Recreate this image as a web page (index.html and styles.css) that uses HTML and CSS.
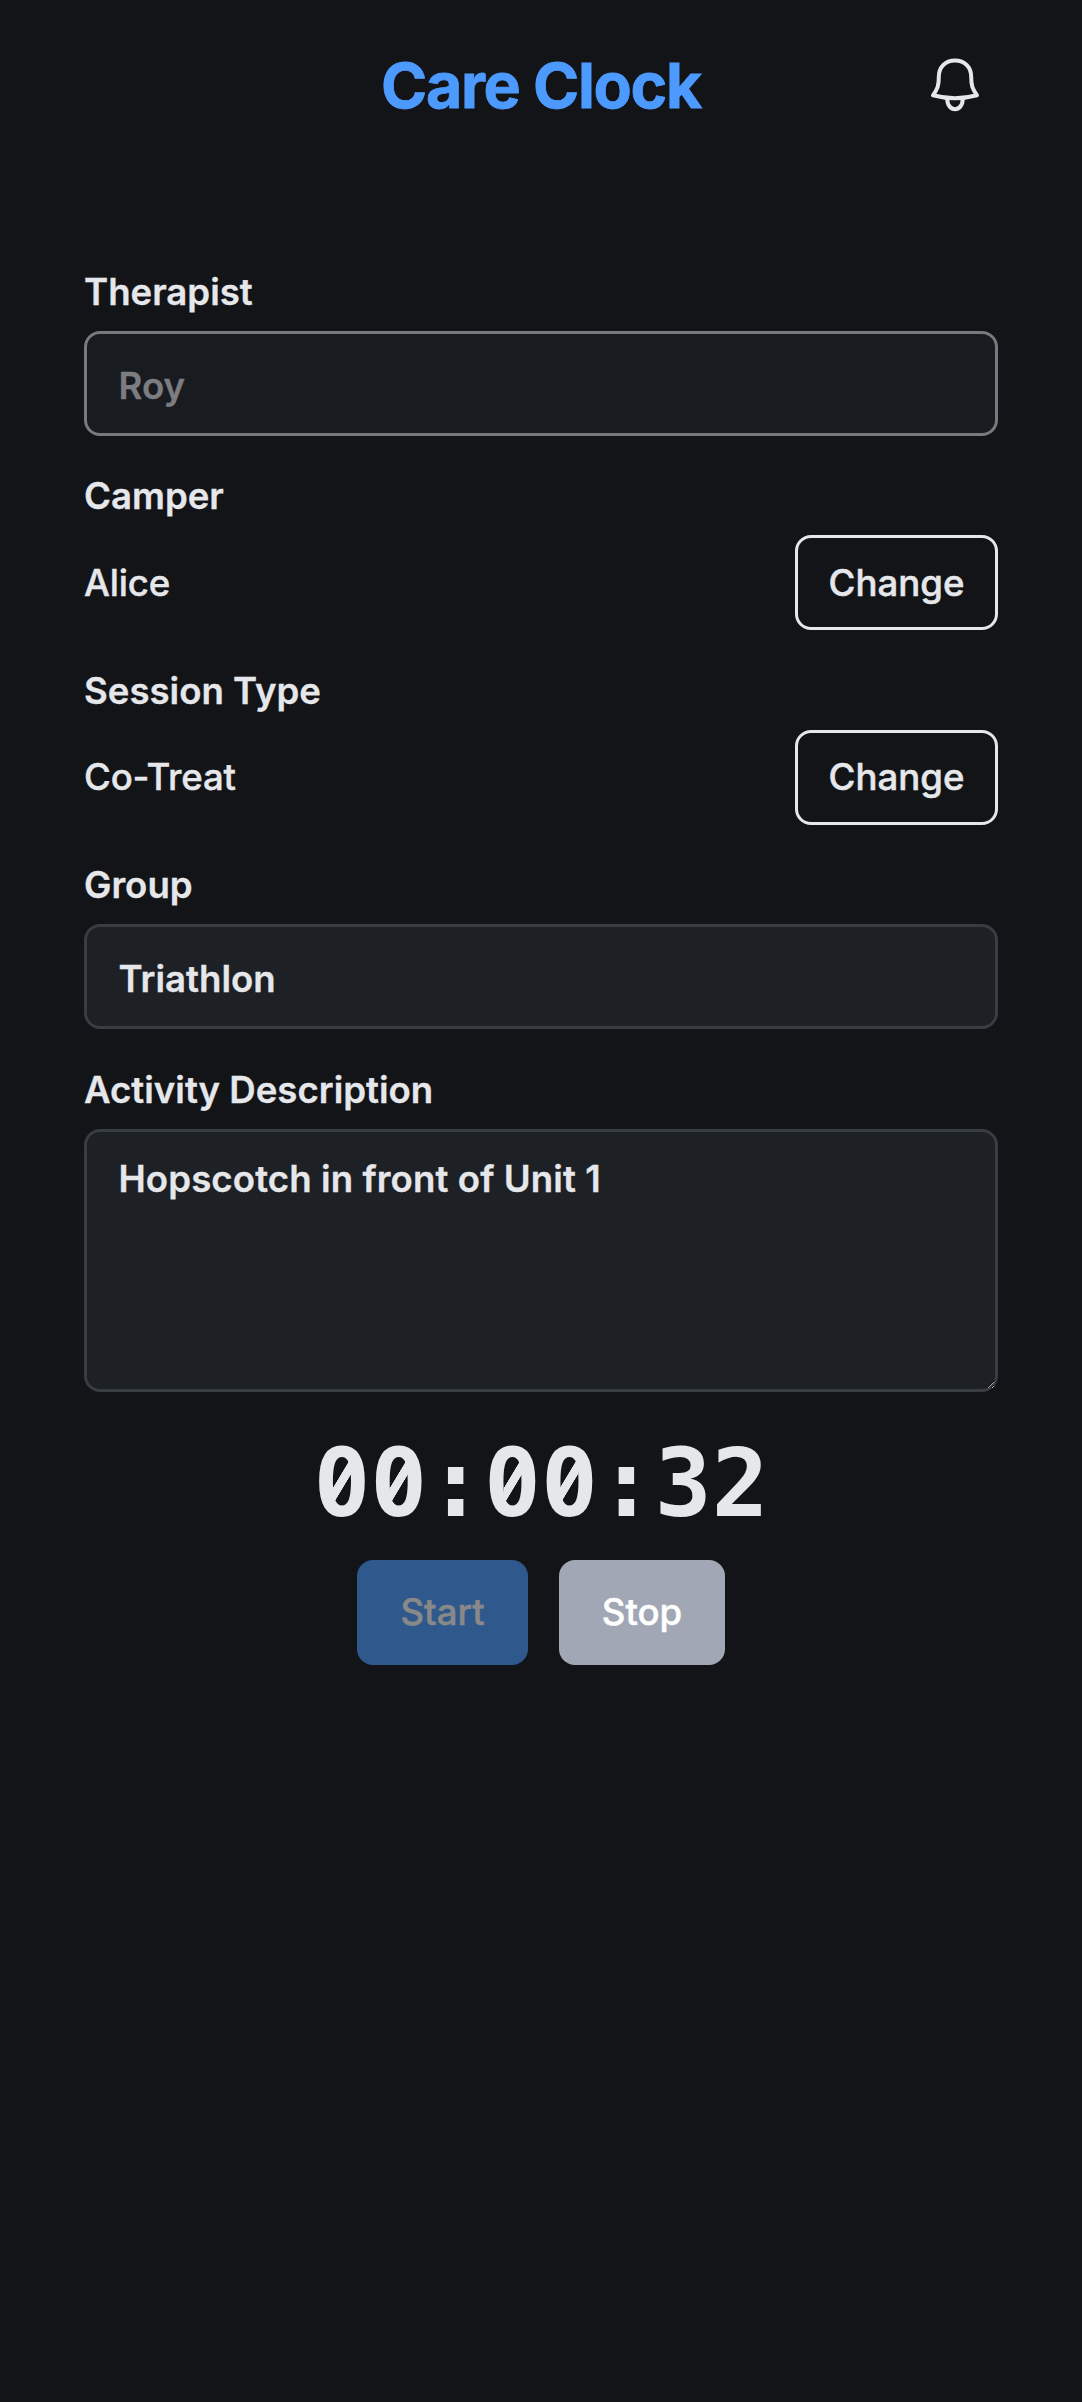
FILE: index.html
```html
<!DOCTYPE html>
<html lang="en">
<head>
<meta charset="utf-8">
<title>Care Clock</title>
<link rel="stylesheet" href="styles.css">
</head>
<body>
<header class="header">
  <h1 class="title">Care Clock</h1>
  <button class="bell" aria-label="Notifications">
    <svg viewBox="0 0 54 54" width="54" height="54" fill="none" stroke="currentColor" stroke-width="4" stroke-linejoin="round">
      <path d="M27 2.500C17 2.500 10.800 9.500 10.800 19C10.800 28 9.500 31 5 37.300Q27 43.300 49 37.300C44.500 31 43.200 28 43.200 19C43.200 9.500 37 2.500 27 2.500Z"/>
      <path d="M19.300 41C19.300 54.500 34.700 54.500 34.700 41"/>
    </svg>
  </button>
</header>
<main class="form">
  <section class="field">
    <label class="label" for="therapist">Therapist</label>
    <input class="control" id="therapist" value="Roy" disabled>
  </section>
  <section class="field">
    <h2 class="label">Camper</h2>
    <div class="row"><span class="value">Alice</span><button class="change">Change</button></div>
  </section>
  <section class="field">
    <h2 class="label">Session Type</h2>
    <div class="row"><span class="value">Co-Treat</span><button class="change">Change</button></div>
  </section>
  <section class="field">
    <label class="label" for="group">Group</label>
    <input class="control" id="group" value="Triathlon">
  </section>
  <section class="field">
    <label class="label" for="activity">Activity Description</label>
    <textarea class="control area" id="activity">Hopscotch in front of Unit 1</textarea>
  </section>
</main>
<section class="clock">
  <div class="time"><span class="zero">0</span><span class="zero">0</span>:<span class="zero">0</span><span class="zero">0</span>:32</div>
  <div class="actions">
    <button class="action start" disabled>Start</button>
    <button class="action stop">Stop</button>
  </div>
</section>
</body>
</html>
```
FILE: styles.css
```css
* { box-sizing: border-box; }
body {
  margin: 0;
  min-height: 2402px;
  background: #131418;
  color: #e6e7eb;
  font-family: Inter, "Liberation Sans", sans-serif;
  font-size: 36.600px;
}
button, input, textarea { font: inherit; color: inherit; margin: 0; }
h1, h2 { margin: 0; }
.header {
  display: grid;
  grid-template-columns: 1fr auto 1fr;
  align-items: center;
  height: 170px;
  padding: 0 100px;
}
.title {
  grid-column: 2;
  color: #4d9aff;
  font-size: 62.500px;
  font-weight: 700;
  letter-spacing: -1.300px;
  line-height: 80px;
  -webkit-text-stroke: 0.800px currentColor;
}
.bell {
  justify-self: end;
  display: flex;
  padding: 0;
  border: 0;
  background: none;
}
.form {
  display: flex;
  flex-direction: column;
  gap: 34.400px;
  padding: 96px 84px 0;
}
.field { display: flex; flex-direction: column; gap: 13px; }
.label {
  font-size: 36.600px;
  font-weight: 600;
  line-height: 52px;
  -webkit-text-stroke: 0.300px currentColor;
}
.row { display: flex; justify-content: space-between; align-items: center; }
.value {
  font-weight: 500;
  letter-spacing: -0.200px;
  -webkit-text-stroke: 0.400px currentColor;
}
.control {
  display: block;
  width: 100%;
  height: 105px;
  padding: 5px 32px 0 31.500px;
  border: 3px solid #383d43;
  border-radius: 16px;
  background: #1d2024;
  font-weight: 600;
  outline: 0;
  -webkit-text-stroke: 0.300px currentColor;
}
.control:disabled { background: #181b1f; border-color: #77797d; color: #7c7d81; }
.area { height: 263px; padding-top: 21px; line-height: 52px; letter-spacing: 0.100px; }
.change {
  width: 203px;
  height: 95px;
  padding: 0;
  border: 3px solid #e6e7eb;
  border-radius: 16px;
  background: transparent;
  font-weight: 500;
  -webkit-text-stroke: 0.500px currentColor;
}
.clock { display: flex; flex-direction: column; align-items: center; }
.time {
  margin-top: 34px;
  font: 700 94.500px/114px "DejaVu Sans Mono", monospace;
}
.zero { display: inline-block; position: relative; }
/* Slash across the counter of the zero, in place of the dot */
.zero::after {
  content: "";
  position: absolute;
  left: calc(50% - 9px);
  top: 31px;
  width: 18px;
  height: 48px;
  background:
    linear-gradient(121deg, transparent calc(50% - 4.500px), #e6e7eb calc(50% - 4px), #e6e7eb calc(50% + 4px), transparent calc(50% + 4.500px)),
    radial-gradient(circle, #131418 7.500px, transparent 8px);
}
.actions { display: flex; gap: 31px; margin-top: 20px; }
.action {
  height: 105px;
  padding: 0;
  border: 0;
  border-radius: 16px;
  font-weight: 500;
  -webkit-text-stroke: 0.500px currentColor;
}
.start { width: 171px; background: #2f588d; color: #898989; }
.stop { width: 166px; background: #a1a7b4; color: #fff; }
```
